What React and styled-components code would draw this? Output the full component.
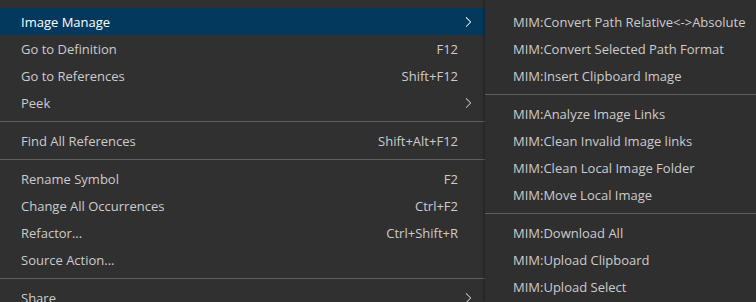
import React from 'react';
import styled, { createGlobalStyle } from 'styled-components';

const GlobalStyle = createGlobalStyle`
  html, body {
    margin: 0;
    padding: 0;
    background: #303031;
    overflow: hidden;
  }
  body {
    font-family: "Open Sans", "Noto Sans", sans-serif;
    font-size: 13px;
    color: #cccccc;
  }
`;

const mainItems = [
  { label: 'Image Manage', submenu: true, active: true },
  { label: 'Go to Definition', key: 'F12' },
  { label: 'Go to References', key: 'Shift+F12' },
  { label: 'Peek', submenu: true },
  { separator: true },
  { label: 'Find All References', key: 'Shift+Alt+F12' },
  { separator: true },
  { label: 'Rename Symbol', key: 'F2' },
  { label: 'Change All Occurrences', key: 'Ctrl+F2' },
  { label: 'Refactor...', key: 'Ctrl+Shift+R' },
  { label: 'Source Action...' },
  { separator: true },
  { label: 'Share', submenu: true },
];

const subItems = [
  { label: 'MIM:Convert Path Relative<->Absolute' },
  { label: 'MIM:Convert Selected Path Format' },
  { label: 'MIM:Insert Clipboard Image' },
  { separator: true },
  { label: 'MIM:Analyze Image Links' },
  { label: 'MIM:Clean Invalid Image links' },
  { label: 'MIM:Clean Local Image Folder' },
  { label: 'MIM:Move Local Image' },
  { separator: true },
  { label: 'MIM:Download All' },
  { label: 'MIM:Upload Clipboard' },
  { label: 'MIM:Upload Select' },
];

function Chevron() {
  return (
    <ChevronIcon viewBox="0 0 16 16" width="16" height="16">
      <path
        fill="currentColor"
        d="M10.072 8.024L5.715 3.667l.618-.62L11 7.716v.618L6.333 13l-.618-.619 4.357-4.357z"
      />
    </ChevronIcon>
  );
}

function Menu({ items, indent, as: Wrap }) {
  return (
    <Wrap>
      {items.map((item, i) =>
        item.separator ? (
          <Separator key={i} />
        ) : (
          <Row key={i} $active={item.active} $indent={indent}>
            <Label>{item.label}</Label>
            {item.key && <Keybinding>{item.key}</Keybinding>}
            {item.submenu && <Chevron />}
          </Row>
        )
      )}
    </Wrap>
  );
}

export default function App() {
  return (
    <>
      <GlobalStyle />
      <Page>
        <Menu items={mainItems} indent={21} as={MainMenu} />
        <Menu items={subItems} indent={28} as={SubMenu} />
      </Page>
    </>
  );
}

const Page = styled.div`
  display: flex;
  width: 756px;
  height: 302px;
  overflow: hidden;
`;

const MainMenu = styled.div`
  width: 485px;
  flex: none;
  padding-top: 8px;
  background: #303031;
`;

const SubMenu = styled.div`
  width: 300px;
  flex: none;
  padding-top: 8px;
  background: #2f2f30;
  box-shadow: -1px 0 3px rgba(0, 0, 0, 0.35);
  position: relative;
  z-index: 1;
`;

const Row = styled.div`
  display: flex;
  align-items: center;
  height: 27px;
  padding: 0 9px 0 ${({ $indent }) => $indent}px;
  background: ${({ $active }) => ($active ? '#04395e' : 'transparent')};
  color: ${({ $active }) => ($active ? '#ffffff' : '#cccccc')};
  white-space: nowrap;
`;

const Label = styled.span`
  flex: 1;
`;

const Keybinding = styled.span`
  margin-right: 18px;
`;

const ChevronIcon = styled.svg`
  display: block;
  flex: none;
`;

const Separator = styled.div`
  height: 1px;
  margin: 5px 0 5px;
  background: #5e5e5e;
`;
